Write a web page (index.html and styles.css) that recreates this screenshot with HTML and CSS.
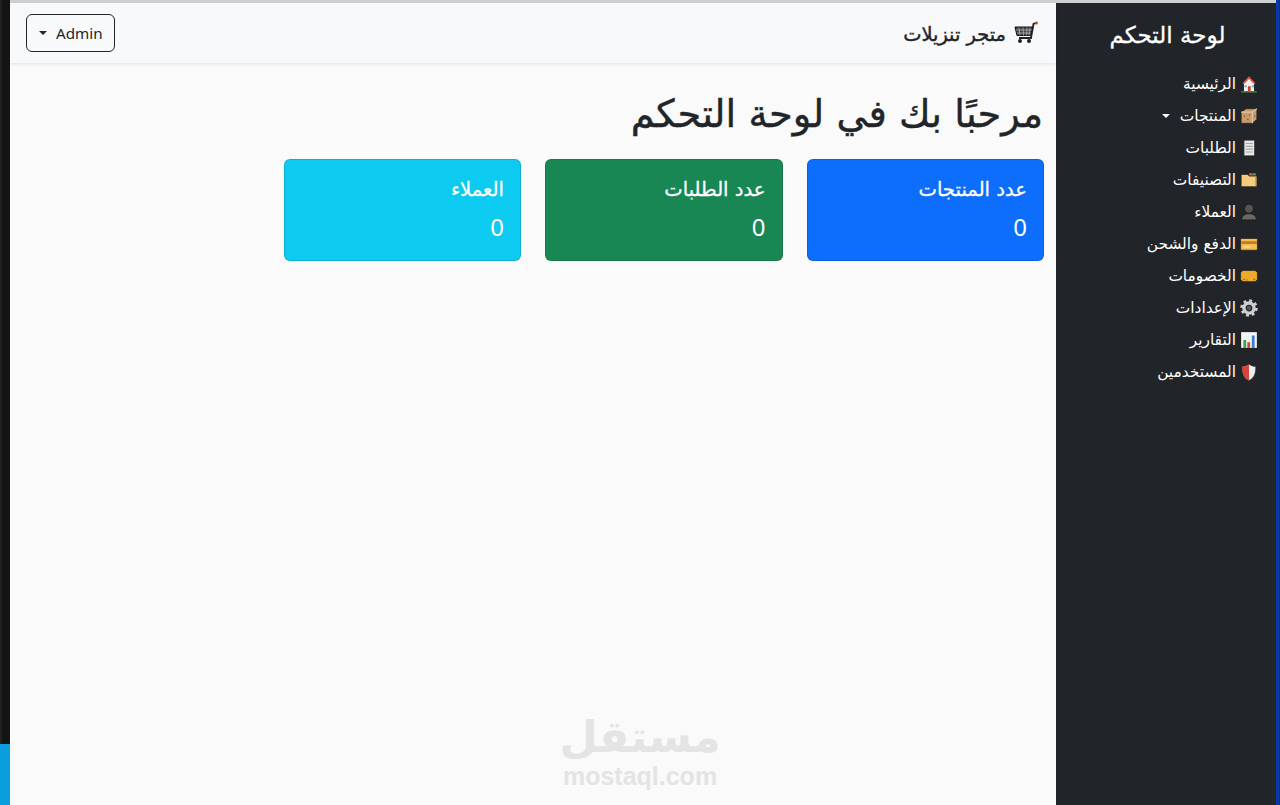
FILE: index.html
```html
<!DOCTYPE html>
<html lang="ar" dir="rtl">

<head>
    <meta charset="UTF-8">
    <title>لوحة التحكم</title>
    <link rel="stylesheet" href="styles.css">
</head>

<body>
    <div class="screen">
        <div class="edge-right"></div>

        <div class="window">
            <aside class="sidebar">
                <h4 class="sidebar-title">لوحة التحكم</h4>
                <ul class="side-menu">
                    <li class="side-item">
                        <svg class="emoji" viewBox="0 0 16 16"><path d="M8 1 1.500 8H3v7h10V8h1.500z" fill="#f4f1ec" stroke="#222"/><path d="M8 1 2 7.500h2L8 3.500l4 4h2z" fill="#d8553f"/><rect x="7" y="10" width="2.500" height="5" fill="#c8402f"/><rect x="4" y="9" width="2" height="2" fill="#4fc3e8"/><rect x="10.500" y="9" width="2" height="2" fill="#4fc3e8"/><rect x="1" y="14.500" width="14" height="1" fill="#4c9a4a"/></svg>
                        <span>الرئيسية</span>
                    </li>
                    <li class="side-item">
                        <svg class="emoji" viewBox="0 0 16 16"><path d="M1 4.500 5.500 1.500H15V11l-4 3.500H1z" fill="#c99a6c" stroke="#222" stroke-width=".7"/><path d="M1 4.500h10v10M11 4.500l4-3" fill="none" stroke="#e4c4a0"/><circle cx="4" cy="8" r=".7" fill="#8a5c3a"/><circle cx="7" cy="11" r=".7" fill="#8a5c3a"/><circle cx="8.500" cy="7" r=".7" fill="#c0563c"/><circle cx="13" cy="8" r=".8" fill="#6b7f95"/></svg>
                        <span>المنتجات</span>
                        <span class="caret caret-light"></span>
                    </li>
                    <li class="side-item">
                        <svg class="emoji" viewBox="0 0 16 16"><path d="M3.500 1H13v14H3.500z" fill="#e8e8e8" stroke="#222" stroke-width=".7"/><path d="M5 4h6.500M5 6.500h6.500M5 9h6.500M5 11.500h6.500" stroke="#a8a8a8"/></svg>
                        <span>الطلبات</span>
                    </li>
                    <li class="side-item">
                        <svg class="emoji" viewBox="0 0 16 16"><path d="M1 3h6l1 1.500h7V14H1z" fill="#f6cc7c" stroke="#222" stroke-width=".7"/><rect x="8" y="2" width="3" height="2" fill="#d8553f"/><rect x="11" y="2" width="3" height="2" fill="#5a9a50"/><path d="M14 5v8" stroke="#c9963f"/></svg>
                        <span>التصنيفات</span>
                    </li>
                    <li class="side-item">
                        <svg class="emoji" viewBox="0 0 16 16"><circle cx="8" cy="5" r="4" fill="#57534e" stroke="#111" stroke-width=".6"/><path d="M1.500 15c0-4 3-5.500 6.500-5.500s6.500 1.500 6.500 5.500z" fill="#6b6762" stroke="#111" stroke-width=".6"/></svg>
                        <span>العملاء</span>
                    </li>
                    <li class="side-item">
                        <svg class="emoji" viewBox="0 0 16 16"><rect x=".5" y="3" width="15" height="10.500" rx="1" fill="#f3bf4f" stroke="#222" stroke-width=".7"/><rect x="1" y="5.500" width="14" height="2.500" fill="#c9782c"/><rect x="3" y="10" width="6" height="1" fill="#fbe6a8"/></svg>
                        <span>الدفع والشحن</span>
                    </li>
                    <li class="side-item">
                        <svg class="emoji" viewBox="0 0 16 16"><path d="M2.500 3h11l2 2v6l-2 2h-11l-2-2V5z" fill="#eda92c" stroke="#222" stroke-width=".7"/><path d="M3 11h1.500M6 11.500h1M12 11h1.500" stroke="#d6472f"/></svg>
                        <span>الخصومات</span>
                    </li>
                    <li class="side-item">
                        <svg class="emoji" viewBox="0 0 16 16"><circle cx="8" cy="8" r="4.500" fill="none" stroke="#cfcfcf" stroke-width="3"/><circle cx="8" cy="8" r="6.500" fill="none" stroke="#cfcfcf" stroke-width="2.500" stroke-dasharray="2.500 2.600"/><circle cx="8" cy="8" r="2" fill="#555"/></svg>
                        <span>الإعدادات</span>
                    </li>
                    <li class="side-item">
                        <svg class="emoji" viewBox="0 0 16 16"><rect x=".5" y=".5" width="15" height="15" fill="#f5f5f5" stroke="#222"/><rect x="3" y="8" width="2.500" height="7" fill="#3fa24a"/><rect x="6.500" y="10" width="2.500" height="5" fill="#d8453a"/><rect x="10.500" y="4" width="2.500" height="11" fill="#3c7fd0"/></svg>
                        <span>التقارير</span>
                    </li>
                    <li class="side-item">
                        <svg class="emoji" viewBox="0 0 16 16"><path d="M8 1C6 2.500 4 3 2 3c0 6 1 10 6 12.500C13 13 14 9 14 3c-2 0-4-.5-6-2z" fill="#eee" stroke="#222" stroke-width=".5"/><path d="M8 1C6 2.500 4 3 2 3c0 6 1 10 6 12.500z" fill="#d6453c"/></svg>
                        <span>المستخدمين</span>
                    </li>
                </ul>
            </aside>

            <div class="main">
                <nav class="topbar">
                    <div class="brand">
                        <svg class="cart" viewBox="0 0 24 24"><path d="M23 1.500 19.500 3 17 17H5" fill="none" stroke="#222" stroke-width="1.800"/><path d="M1 6h17.500l-2 8.500H3z" fill="#444" stroke="#111"/><path d="M5 6.500l1 8M9 6.500l.5 8M13 6.500l-.5 8M16 6.500l-1 8M2 9h16M3 12h14" stroke="#bbb" stroke-width=".7"/><circle cx="6" cy="20" r="2" fill="#222"/><circle cx="15" cy="20" r="2" fill="#222"/><circle cx="22.500" cy="2" r="1.500" fill="#d8453a"/></svg>
                        <span class="brand-name">متجر تنزيلات</span>
                    </div>
                    <button class="admin-btn" type="button">
                        <span>Admin</span>
                        <span class="caret"></span>
                    </button>
                </nav>

                <div class="content">
                    <h1 class="page-title">مرحبًا بك في لوحة التحكم</h1>
                    <div class="cards">
                        <div class="card card-blue">
                            <h5>عدد المنتجات</h5>
                            <p>0</p>
                        </div>
                        <div class="card card-green">
                            <h5>عدد الطلبات</h5>
                            <p>0</p>
                        </div>
                        <div class="card card-cyan">
                            <h5>العملاء</h5>
                            <p>0</p>
                        </div>
                    </div>
                    <div class="watermark">
                        <span class="wm-ar">مستقل</span>
                        <span class="wm-en">mostaql.com</span>
                    </div>
                </div>
            </div>
        </div>

        <div class="gutter">
            <div class="gutter-dark"></div>
            <div class="gutter-blue"></div>
        </div>
    </div>
</body>

</html>
```

FILE: styles.css
```css
* {
    box-sizing: border-box;
}

html,
body {
    height: 100%;
}

body {
    margin: 0;
    font-family: "DejaVu Sans", "Noto Sans", sans-serif;
    font-size: 16px;
    color: #212529;
    background-color: #141414;
    overflow: hidden;
}

.screen {
    display: flex;
    height: 805px;
}

/* Browser window in the middle, bits of the desktop either side */
.window {
    flex: 1;
    display: flex;
    min-width: 0;
    padding-top: 3px;
    background-color: #d0d0d0;
}

.edge-right {
    width: 4px;
    flex: none;
    background-color: #0a3aa8;
    border-right: 1px solid #1b2a4a;
}

/* Sidebar */
.sidebar {
    width: 220px;
    flex: none;
    background-color: #212529;
    color: #fff;
    padding: 16px 18px 0 0;
}

.sidebar-title {
    margin: 0 0 17px;
    padding-left: 21px;
    font-size: 23px;
    font-weight: 400;
    line-height: 32px;
    text-align: center;
    -webkit-text-stroke: 0.3px #fff;
}

.side-menu {
    list-style: none;
    margin: 0;
    padding: 0;
}

.side-item {
    display: flex;
    align-items: center;
    gap: 4px;
    height: 32px;
    font-size: 15.400px;
}

.emoji {
    width: 18px;
    height: 18px;
    flex: none;
}

.caret {
    display: inline-block;
    width: 0;
    height: 0;
    border-top: 4.800px solid #212529;
    border-left: 4.800px solid transparent;
    border-right: 4.800px solid transparent;
}

.caret-light {
    margin-right: 6px;
    border-top-color: #fff;
    border-width: 4px 4px 0;
}

/* Main column */
.main {
    flex: 1;
    display: flex;
    flex-direction: column;
    background-color: #fafafa;
    min-width: 0;
}

.topbar {
    height: 60px;
    flex: none;
    display: flex;
    align-items: center;
    justify-content: space-between;
    padding: 0 18px 0 16px;
    background-color: #f8f9fa;
    box-shadow: 0 1px 3px rgba(0, 0, 0, 0.1);
}

.brand {
    display: flex;
    align-items: center;
    gap: 8px;
    color: #212529;
}

.brand-name {
    padding-top: 2px;
    font-size: 19.400px;
    -webkit-text-stroke: 0.4px #212529;
}

.cart {
    width: 24px;
    height: 24px;
}

.admin-btn {
    display: flex;
    align-items: center;
    gap: 9px;
    height: 38px;
    padding: 0 11px 0 12px;
    background: transparent;
    border: 1px solid #212529;
    border-radius: 6px;
    color: #212529;
    font-family: "Noto Sans", sans-serif;
    font-size: 15.200px;
}

.content {
    flex: 1;
    position: relative;
    padding: 27px 12px 0 0;
}

.page-title {
    margin: 0 0 21px;
    font-size: 38.400px;
    font-weight: 400;
    line-height: 48px;
    height: 48px;
    padding-right: 1px;
    -webkit-text-stroke: 0.4px #212529;
}

.cards {
    display: flex;
    gap: 24px;
}

.card {
    width: 237.500px;
    height: 102px;
    padding: 16px;
    border-radius: 6px;
    border: 1px solid rgba(0, 0, 0, 0.125);
    color: #fff;
}

.card h5 {
    margin: 0 0 8px;
    font-size: 19.600px;
    font-weight: 400;
    line-height: 28px;
    -webkit-text-stroke: 0.3px #fff;
}

.card p {
    margin: 0;
    font-family: "Noto Sans", sans-serif;
    font-size: 24px;
    line-height: 30px;
}

.card-blue {
    background-color: #0d6efd;
}

.card-green {
    background-color: #198754;
}

.card-cyan {
    background-color: #0dcaf0;
}

/* Watermark sits over the page */
.watermark {
    position: absolute;
    left: 552px;
    bottom: 16px;
    width: 156px;
    display: flex;
    flex-direction: column;
    align-items: center;
    color: #e4e4e4;
    pointer-events: none;
}

.wm-ar {
    font-size: 44px;
    font-weight: 700;
    line-height: 52px;
}

.wm-en {
    font-family: "Liberation Sans", sans-serif;
    font-size: 25px;
    font-weight: 700;
    line-height: 26px;
}

/* Strip of the window behind, on the left */
.gutter {
    width: 10px;
    flex: none;
    display: flex;
    flex-direction: column;
}

.gutter-dark {
    flex: 1;
    background-color: #141414;
    border-left: 2px solid #222;
}

.gutter-blue {
    height: 61px;
    background-color: #0a9fdc;
}
```
